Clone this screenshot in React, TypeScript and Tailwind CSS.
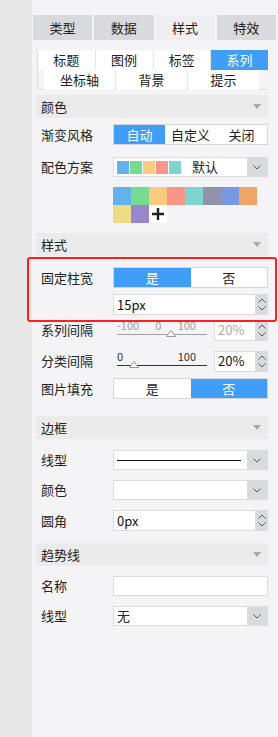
import React from 'react';

const BLUE = 'bg-[#419ef8]';
const FONT = { fontFamily: '"Microsoft YaHei", "Noto Sans CJK SC", "Liberation Sans", sans-serif' };

function Chevron({ up = false }: { up?: boolean }) {
  return (
    <svg width="8" height="5" viewBox="0 0 8 5" className="block">
      <path d={up ? 'M0.5 4.5 L4 1 L7.5 4.5' : 'M0.5 0.5 L4 4 L7.5 0.5'} fill="none" stroke="#555" strokeWidth="1" />
    </svg>
  );
}

function SectionHeader({ title, className = '' }: { title: string; className?: string }) {
  return (
    <div className={`flex h-[23px] items-center justify-between bg-[#ebebeb] pl-[5px] pr-[7px] text-[13px] text-[#222] ${className}`}>
      <span>{title}</span>
      <svg width="8" height="5" viewBox="0 0 8 5">
        <path d="M0 0 H8 L4 5 Z" fill="#a8a8a8" />
      </svg>
    </div>
  );
}

function Row({ label, children, className = '' }: { label: string; children: React.ReactNode; className?: string }) {
  return (
    <div className={`flex items-center ${className}`}>
      <div className="w-[77px] shrink-0 pl-[5px] text-[13px] text-[#222]">{label}</div>
      <div className="w-[155px]">{children}</div>
    </div>
  );
}

function Toggle({ items, active }: { items: string[]; active: number }) {
  return (
    <div className="flex h-[21px] border border-[#d6d6d6] bg-white text-[13px]">
      {items.map((t, i) => (
        <div
          key={t}
          className={`flex flex-1 items-center justify-center ${i === active ? `${BLUE} text-white` : 'text-[#222]'}`}
        >
          {t}
        </div>
      ))}
    </div>
  );
}

function SelectBox({ children }: { children?: React.ReactNode }) {
  return (
    <div className="flex h-[20px] border border-[#dcdcdc] bg-white">
      <div className="flex flex-1 items-center overflow-hidden px-[3px] text-[13px] text-[#222]">{children}</div>
      <div className="flex w-[20px] items-center justify-center bg-[#d9dadd]">
        <Chevron />
      </div>
    </div>
  );
}

function Spinner({ value, disabled = false, wide = true }: { value: string; disabled?: boolean; wide?: boolean }) {
  return (
    <div className={`flex h-[21px] ${wide ? 'w-full' : 'w-[54px]'}`}>
      <div
        className={`flex flex-1 items-center border border-[#dcdcdc] bg-white px-[3px] text-[13px] ${disabled ? 'text-[#aaa]' : 'text-[#111]'}`}
      >
        {value}
      </div>
      <div className="flex w-[12px] flex-col items-center justify-center gap-[3px] bg-[#d9dadd]">
        <Chevron up />
        <Chevron />
      </div>
    </div>
  );
}

function Slider({ labels, pos, disabled = false }: { labels: string[]; pos: number; disabled?: boolean }) {
  const c = disabled ? '#a0a0a0' : '#333';
  return (
    <div className="relative h-[22px] w-[94px]" style={{ color: c }}>
      <div className="flex justify-between pl-[4px] pr-[11px] text-[11px] leading-[12px]">
        {labels.map((l) => (
          <span key={l}>{l}</span>
        ))}
      </div>
      <div className="absolute left-[4px] right-0 top-[15px] h-px" style={{ background: c }} />
      <svg
        width="10"
        height="7"
        viewBox="0 0 10 7"
        className="absolute top-[11px]"
        style={{ left: pos }}
      >
        <path d="M5 0.5 L9.5 6.5 H0.5 Z" fill="#fff" stroke="#999" strokeWidth="1" />
      </svg>
    </div>
  );
}

const swatches = ['#63b2ee', '#76da91', '#f8cb7f', '#f89588', '#7cd6cf'];
const palette = ['#63b2ee', '#76da91', '#f8cb7f', '#f89588', '#7cd6cf', '#9192ab', '#7898e1', '#efa666', '#eddd86', '#9987ce'];

export default function App() {
  return (
    <div className="flex h-[737px] w-[278px] overflow-hidden" style={FONT}>
      <div className="w-[32px] shrink-0 bg-[#e8e8e8]" />
      <div className="relative flex-1 bg-[#f4f4f6]">
        {/* top tabs */}
        <div className="ml-[1px] mt-[15px] grid w-[243px] grid-cols-4 gap-[2px] text-[13px] text-[#222]">
          {['类型', '数据', '样式', '特效'].map((t) => (
            <div
              key={t}
              className={`flex h-[25px] items-center justify-center ${t === '样式' ? 'bg-[#efeff1]' : 'bg-[#d9dadd]'}`}
            >
              {t}
            </div>
          ))}
        </div>

        {/* sub tabs */}
        <div className="ml-[5px] mt-[10px] w-[231px] border-b border-l border-[#dcdcdc] text-[13px] text-[#222]">
          <div className="grid h-[20px] grid-cols-4 gap-px bg-[#e6e6e6]">
            {['标题', '图例', '标签', '系列'].map((t) => (
              <div
                key={t}
                className={`flex items-center justify-center ${t === '系列' ? `${BLUE} text-white` : 'bg-white'}`}
              >
                {t}
              </div>
            ))}
          </div>
          <div className="ml-[6px] grid h-[19px] w-[215px] grid-cols-3 gap-px bg-[#e6e6e6]">
            {['坐标轴', '背景', '提示'].map((t) => (
              <div key={t} className="flex items-center justify-center bg-white">
                {t}
              </div>
            ))}
          </div>
        </div>

        <div className="ml-[4px] w-[232px]">
          {/* 颜色 */}
          <SectionHeader title="颜色" className="mt-[5px]" />
          <Row label="渐变风格" className="mt-[6px]">
            <Toggle items={['自动', '自定义', '关闭']} active={0} />
          </Row>
          <Row label="配色方案" className="mt-[12px]">
            <SelectBox>
              <div className="flex gap-px">
                {swatches.map((c) => (
                  <div key={c} className="h-[13px] w-[12px]" style={{ background: c }} />
                ))}
              </div>
              <span className="ml-[11px]">默认</span>
            </SelectBox>
          </Row>
          <div className="ml-[77px] mt-[10px] grid w-[144px] grid-cols-8">
            {palette.map((c) => (
              <div key={c} className="h-[18px]" style={{ background: c }} />
            ))}
            <div className="flex h-[18px] items-center justify-center bg-white">
              <svg width="12" height="12" viewBox="0 0 12 12">
                <path d="M6 0 V12 M0 6 H12" stroke="#222" strokeWidth="2.4" />
              </svg>
            </div>
          </div>

          {/* 样式 */}
          <SectionHeader title="样式" className="mt-[10px]" />
          <Row label="固定柱宽" className="mt-[11px]">
            <Toggle items={['是', '否']} active={0} />
          </Row>
          <div className="ml-[77px] mt-[6px] w-[155px]">
            <Spinner value="15px" />
          </div>
          <Row label="系列间隔" className="mt-[4px]">
            <div className="flex items-center justify-between">
              <Slider labels={['-100', '0', '100']} pos={53} disabled />
              <Spinner value="20%" disabled wide={false} />
            </div>
          </Row>
          <Row label="分类间隔" className="mt-[9px]">
            <div className="flex items-center justify-between">
              <Slider labels={['0', '100']} pos={16} />
              <Spinner value="20%" wide={false} />
            </div>
          </Row>
          <Row label="图片填充" className="mt-[6px]">
            <Toggle items={['是', '否']} active={1} />
          </Row>

          {/* 边框 */}
          <SectionHeader title="边框" className="mt-[17px]" />
          <Row label="线型" className="mt-[11px]">
            <SelectBox>
              <div className="h-px w-[124px] bg-[#111]" />
            </SelectBox>
          </Row>
          <Row label="颜色" className="mt-[10px]">
            <SelectBox />
          </Row>
          <Row label="圆角" className="mt-[10px]">
            <Spinner value="0px" />
          </Row>

          {/* 趋势线 */}
          <SectionHeader title="趋势线" className="mt-[12px]" />
          <Row label="名称" className="mt-[10px]">
            <div className="h-[20px] border border-[#dcdcdc] bg-white" />
          </Row>
          <Row label="线型" className="mt-[10px]">
            <SelectBox>无</SelectBox>
          </Row>
        </div>

        {/* highlight */}
        <div className="pointer-events-none absolute left-[-5px] top-[257px] h-[65px] w-[250px] rounded-[3px] border-2 border-[#ff1f1f]" />
      </div>
    </div>
  );
}
